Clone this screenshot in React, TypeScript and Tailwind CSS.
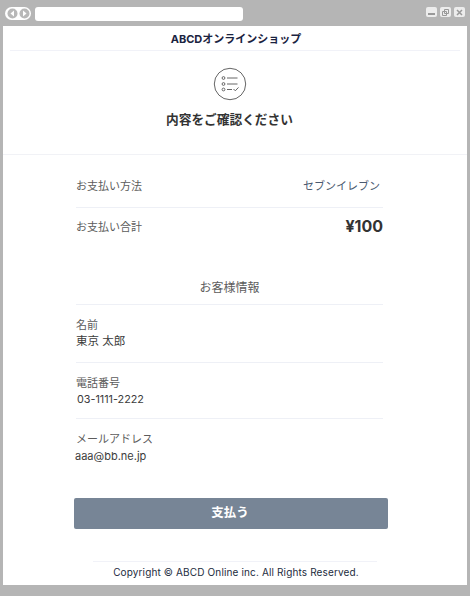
const font = { fontFamily: 'Inter, "Noto Sans CJK JP", sans-serif' }

function BrowserBar() {
  return (
    <div className="h-[26px] flex items-start px-[5px] pt-[7px]">
      <div className="w-[26px] h-[13px] rounded-full bg-white flex items-center justify-center gap-[1px]">
        <svg width="11" height="11" viewBox="0 0 11 11">
          <circle cx="5.5" cy="5.5" r="5" fill="#b8b8b8" />
          <path d="M7 2.5 3.5 5.5 7 8.5Z" fill="#fff" />
        </svg>
        <svg width="11" height="11" viewBox="0 0 11 11">
          <circle cx="5.5" cy="5.5" r="5" fill="#b8b8b8" />
          <path d="M4 2.5 7.5 5.5 4 8.5Z" fill="#fff" />
        </svg>
      </div>
      <div className="ml-[4px] w-[208px] h-[14px] rounded-[3px] bg-white" />
      <div className="ml-auto flex gap-[3px]">
        <div className="w-[11px] h-[10px] rounded-[2px] bg-[#ececec] flex items-end justify-center pb-[2px]">
          <div className="w-[7px] h-[2px] bg-[#999]" />
        </div>
        <div className="w-[11px] h-[10px] rounded-[2px] bg-[#ececec] flex items-center justify-center">
          <svg width="9" height="9" viewBox="0 0 9 9" fill="none" stroke="#999">
            <path d="M3.5 1.5h4v4h-4zM1.5 3.5h4v4h-4z" />
          </svg>
        </div>
        <div className="w-[11px] h-[10px] rounded-[2px] bg-[#ececec] flex items-center justify-center">
          <svg width="9" height="9" viewBox="0 0 9 9" fill="none" stroke="#999" strokeWidth="1.5">
            <path d="M2 2l5 5M7 2 2 7" />
          </svg>
        </div>
      </div>
    </div>
  )
}

function CheckIcon() {
  return (
    <svg width="34" height="34" viewBox="0 0 34 34" fill="none" stroke="#666" strokeWidth="1">
      <circle cx="17" cy="17" r="15.7" />
      <circle cx="10.5" cy="11" r="1.4" />
      <circle cx="10.5" cy="17" r="1.4" />
      <circle cx="10.5" cy="22.5" r="1.4" />
      <path d="M14 11h10.5M14 17h10.5M14 22.5h5M20.5 22l1.8 1.8 3.2-3.4" />
    </svg>
  )
}

function Info({ label, value, className, valueClassName }: { label: string; value: string; className: string; valueClassName?: string }) {
  return (
    <div className={className}>
      <div className="text-[11px] leading-[16px] text-[#5c5c5c]">{label}</div>
      <div className={`leading-[16px] text-[#3c3c3c] ${valueClassName ?? "text-[11px]"}`}>{value}</div>
    </div>
  )
}

export default function App() {
  return (
    <div className="w-[470px] h-[596px] bg-[#b5b5b5] overflow-hidden" style={font}>
      <BrowserBar />
      <div className="mx-[3px] w-[464px] h-[559px] bg-white flex flex-col">
        <div className="mx-[7px] h-[25px] pt-[3px] pl-[2px] border-b border-[#f1f2f8] flex items-center justify-center text-[11px] font-bold text-[#1a2340]">
          ABCDオンラインショップ
        </div>
        <div className="h-[104px] pr-[11px] border-b border-[#f1f2f6] flex flex-col items-center pt-[16px]">
          <CheckIcon />
          <div className="mt-[9px] text-[12.7px] leading-[20px] font-bold text-[#333]">内容をご確認ください</div>
        </div>
        <div className="ml-[73px] mr-[84px] flex flex-col">
          <div className="h-[53px] pt-[10px] border-b border-[#eef0f6] flex items-center justify-between text-[11px] text-[#5c5c5c]">
            <span>お支払い方法</span>
            <span className="pr-[3px] text-[#4a5a70]">セブンイレブン</span>
          </div>
          <div className="h-[38px] pt-[1px] flex items-center justify-between text-[11px] text-[#5c5c5c]">
            <span>お支払い合計</span>
            <span className="text-[16px] font-bold text-[#333] -translate-y-[2px]">¥100</span>
          </div>
          <div className="mt-[23px] h-[36px] pt-[2px] border-b border-[#eef0f6] flex items-center justify-center text-[12px] text-[#5c5c5c]">
            お客様情報
          </div>
          <Info label="名前" value="東京 太郎" valueClassName="text-[11.5px]" className="pt-[12px] pb-[13px] border-b border-[#eef0f6]" />
          <Info label="電話番号" value="03-1111-2222" valueClassName="mt-[1px] pl-[1px] text-[10.8px]" className="pt-[12px] pb-[10px] border-b border-[#eef0f6]" />
          <Info label="メールアドレス" value="aaa@bb.ne.jp" valueClassName="mt-[1px] -ml-[1px] text-[11px]" className="pt-[12px]" />
        </div>
        <div className="ml-[71px] mr-[79px] mt-[34px] h-[31px] pr-[2px] rounded-[2px] bg-[#778596] flex items-center justify-center text-[12.5px] font-bold text-white">
          支払う
        </div>
        <div className="mx-[90px] mt-[32px] pl-[2px] border-t border-[#f1f2f8] pt-[2px] text-center text-[10px] leading-[16px] tracking-[0.14px] text-[#222b40] whitespace-nowrap">
          Copyright © ABCD Online inc. All Rights Reserved.
        </div>
      </div>
    </div>
  )
}
